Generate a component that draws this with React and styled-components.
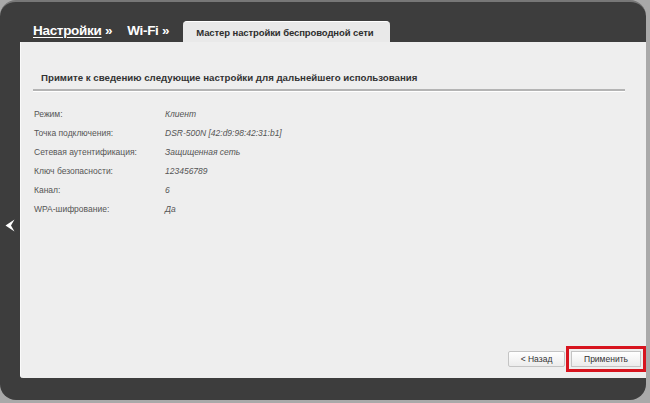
import React from "react";
import styled, { createGlobalStyle } from "styled-components";

const GlobalStyle = createGlobalStyle`
  html, body {
    margin: 0;
    padding: 0;
    background: #a9a9a9;
    font-family: "Liberation Sans", Arial, sans-serif;
  }
`;

const Page = styled.div`
  width: 650px;
  height: 403px;
  overflow: hidden;
  background: #a9a9a9;
`;

const Frame = styled.div`
  width: 646px;
  height: 400px;
  box-sizing: border-box;
  background: #3d3d3d;
  border-top: 2px solid #777;
  border-radius: 16px;
  display: flex;
  flex-direction: column;
`;

const TabBar = styled.div`
  height: 40px;
  display: flex;
  align-items: flex-end;
  padding-left: 33px;
`;

const Crumb = styled.div`
  color: #fff;
  font-size: 13.5px;
  font-weight: bold;
  margin-right: ${(p) => p.$gap}px;
  margin-bottom: 4px;
  letter-spacing: -0.3px;

  span {
    text-decoration: ${(p) => (p.$underline ? "underline" : "none")};
    text-underline-offset: 2px;
  }
`;

const ActiveTab = styled.div`
  width: 207px;
  height: 21px;
  box-sizing: border-box;
  margin-left: 1px;
  background: #e9e9e9;
  border-radius: 4px 4px 0 0;
  border-top: 1px solid #fff;
  display: flex;
  align-items: center;
  padding-left: 13px;
  color: #2e2e2e;
  font-size: 9.5px;
  font-weight: bold;
  letter-spacing: -0.1px;
`;

const Body = styled.div`
  flex: 1;
  display: flex;
  margin-bottom: 22px;
`;

const Side = styled.div`
  width: 20px;
  display: flex;
  align-items: center;
  justify-content: center;
  padding-top: 30px;
`;

const Panel = styled.div`
  flex: 1;
  background: #eeeeee;
  border-left: 1px solid #fafafa;
  border-radius: 0 0 0 3px;
  display: flex;
  flex-direction: column;
  padding: 30px 0 10px 0;
`;

const Heading = styled.div`
  margin-left: 20px;
  font-size: 9.7px;
  font-weight: bold;
  color: #333;
  padding-bottom: 6px;
`;

const Rule = styled.div`
  margin: 0 21px 0 12px;
  height: 2px;
  background: #b4b4b4;
  border-bottom: 1px solid #fff;
`;

const Rows = styled.div`
  margin-top: 12px;
  margin-left: 13px;
  display: flex;
  flex-direction: column;
`;

const Row = styled.div`
  display: flex;
  height: 19px;
  align-items: center;
  font-size: 8.5px;
  color: #555;
`;

const Label = styled.div`
  width: 131px;
`;

const Value = styled.div`
  font-style: italic;
`;

const Actions = styled.div`
  margin-top: auto;
  display: flex;
  justify-content: flex-end;
  gap: 6px;
  padding-right: 5px;
  margin-bottom: 1px;
`;

const Button = styled.button`
  height: 16px;
  width: ${(p) => p.$w}px;
  box-sizing: border-box;
  border: 1px solid #c4c4c4;
  border-radius: ${(p) => (p.$highlight ? 0 : 2)}px;
  background: linear-gradient(#ffffff, #ececec);
  font-family: "Liberation Sans", Arial, sans-serif;
  font-size: 8.5px;
  color: #333;
  padding: 0;
  outline: ${(p) => (p.$highlight ? "3px solid #d7141e" : "none")};
  outline-offset: 2px;
`;

const rows = [
  ["Режим:", "Клиент"],
  ["Точка подключения:", "DSR-500N [42:d9:98:42:31:b1]"],
  ["Сетевая аутентификация:", "Защищенная сеть"],
  ["Ключ безопасности:", "123456789"],
  ["Канал:", "6"],
  ["WPA-шифрование:", "Да"],
];

export default function App() {
  return (
    <Page>
      <GlobalStyle />
      <Frame>
        <TabBar>
          <Crumb $underline $gap={15}>
            <span>Настройки</span> »
          </Crumb>
          <Crumb $gap={13}>Wi-Fi »</Crumb>
          <ActiveTab>Мастер настройки беспроводной сети</ActiveTab>
        </TabBar>
        <Body>
          <Side>
            <svg width="10" height="13" viewBox="0 0 10 13">
              <path d="M9.5 0.5 L0.5 6.5 L9.5 12.5 L6 6.5 Z" fill="#fff" />
            </svg>
          </Side>
          <Panel>
            <Heading>Примите к сведению следующие настройки для дальнейшего использования</Heading>
            <Rule />
            <Rows>
              {rows.map(([l, v]) => (
                <Row key={l}>
                  <Label>{l}</Label>
                  <Value>{v}</Value>
                </Row>
              ))}
            </Rows>
            <Actions>
              <Button $w={57}>&lt; Назад</Button>
              <Button $w={70} $highlight>
                Применить
              </Button>
            </Actions>
          </Panel>
        </Body>
      </Frame>
    </Page>
  );
}
